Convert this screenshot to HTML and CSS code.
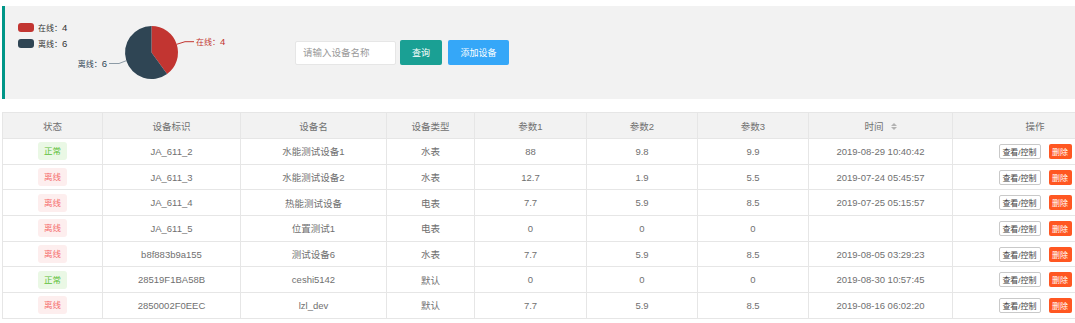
FILE: index.html
```html
<!DOCTYPE html>
<html lang="zh-CN">

<head>
    <meta charset="UTF-8" />
    <meta name="viewport" content="width=device-width, initial-scale=1.0" />
    <title>设备列表</title>
    <link rel="stylesheet" href="styles.css">
</head>

<body>
    <div class="quote">
        <svg class="chart" width="290" height="93" viewBox="0 0 290 93">
            <rect x="13" y="17" width="16" height="9" rx="3" fill="#c23531" />
            <text x="33" y="24.5" class="legend-text">在线：<tspan class="num">4</tspan></text>
            <rect x="13" y="33" width="16" height="9" rx="3" fill="#2f4554" />
            <text x="33" y="40.5" class="legend-text">离线：<tspan class="num">6</tspan></text>

            <path d="M146.5 46.5 L146.5 20 A26.5 26.5 0 0 1 162.08 67.94 Z" fill="#c23531" />
            <path d="M146.5 46.5 L162.08 67.94 A26.5 26.5 0 1 1 146.5 20 Z" fill="#2f4554" />

            <polyline points="171.7,38.3 180,35.7 189,35.7" fill="none" stroke="#c23531" stroke-width="1" />
            <text x="191" y="38.7" class="label-text" fill="#c23531">在线：<tspan class="num">4</tspan></text>
            <polyline points="121.3,54.7 114,57.5 104,57.5" fill="none" stroke="#8d9ba6" stroke-width="1" />
            <text x="102" y="60.5" class="label-text" fill="#2f4554" text-anchor="end">离线：<tspan class="num">6</tspan></text>
        </svg>
        <form class="search">
            <input type="text" name="name" placeholder="请输入设备名称" />
            <button type="button" class="btn btn-query">查询</button>
            <button type="button" class="btn btn-add">添加设备</button>
        </form>
    </div>

    <table class="device-table">
        <colgroup>
            <col style="width:100px">
            <col style="width:138px">
            <col style="width:146px">
            <col style="width:88px">
            <col style="width:112px">
            <col style="width:111px">
            <col style="width:111px">
            <col style="width:144px">
            <col style="width:165px">
        </colgroup>
        <thead>
            <tr>
                <th>状态</th>
                <th>设备标识</th>
                <th>设备名</th>
                <th>设备类型</th>
                <th>参数1</th>
                <th>参数2</th>
                <th>参数3</th>
                <th>时间<span class="sort"><i class="up"></i><i class="down"></i></span></th>
                <th>操作</th>
            </tr>
        </thead>
        <tbody>
            <tr>
                <td><span class="tag tag-ok">正常</span></td>
                <td>JA_611_2</td>
                <td>水能测试设备1</td>
                <td>水表</td>
                <td>88</td>
                <td>9.8</td>
                <td>9.9</td>
                <td>2019-08-29 10:40:42</td>
                <td><button class="op-view">查看/控制</button><button class="op-del">删除</button></td>
            </tr>
            <tr>
                <td><span class="tag tag-off">离线</span></td>
                <td>JA_611_3</td>
                <td>水能测试设备2</td>
                <td>水表</td>
                <td>12.7</td>
                <td>1.9</td>
                <td>5.5</td>
                <td>2019-07-24 05:45:57</td>
                <td><button class="op-view">查看/控制</button><button class="op-del">删除</button></td>
            </tr>
            <tr>
                <td><span class="tag tag-off">离线</span></td>
                <td>JA_611_4</td>
                <td>热能测试设备</td>
                <td>电表</td>
                <td>7.7</td>
                <td>5.9</td>
                <td>8.5</td>
                <td>2019-07-25 05:15:57</td>
                <td><button class="op-view">查看/控制</button><button class="op-del">删除</button></td>
            </tr>
            <tr>
                <td><span class="tag tag-off">离线</span></td>
                <td>JA_611_5</td>
                <td>位置测试1</td>
                <td>电表</td>
                <td>0</td>
                <td>0</td>
                <td>0</td>
                <td></td>
                <td><button class="op-view">查看/控制</button><button class="op-del">删除</button></td>
            </tr>
            <tr>
                <td><span class="tag tag-off">离线</span></td>
                <td>b8f883b9a155</td>
                <td>测试设备6</td>
                <td>水表</td>
                <td>7.7</td>
                <td>5.9</td>
                <td>8.5</td>
                <td>2019-08-05 03:29:23</td>
                <td><button class="op-view">查看/控制</button><button class="op-del">删除</button></td>
            </tr>
            <tr>
                <td><span class="tag tag-ok">正常</span></td>
                <td>28519F1BA58B</td>
                <td>ceshi5142</td>
                <td>默认</td>
                <td>0</td>
                <td>0</td>
                <td>0</td>
                <td>2019-08-30 10:57:45</td>
                <td><button class="op-view">查看/控制</button><button class="op-del">删除</button></td>
            </tr>
            <tr>
                <td><span class="tag tag-off">离线</span></td>
                <td>2850002F0EEC</td>
                <td>lzl_dev</td>
                <td>默认</td>
                <td>7.7</td>
                <td>5.9</td>
                <td>8.5</td>
                <td>2019-08-16 06:02:20</td>
                <td><button class="op-view">查看/控制</button><button class="op-del">删除</button></td>
            </tr>
        </tbody>
    </table>
</body>

</html>
```

FILE: styles.css
```css
html,
body {
    overflow: hidden;
}

body {
    margin: 6px 0 0 2px;
    background-color: #fff;
    font-family: "Liberation Sans", "Noto Sans CJK SC", sans-serif;
    color: #666;
}

.quote {
    display: flex;
    align-items: center;
    width: 1115px;
    height: 93px;
    box-sizing: border-box;
    border-left: 3px solid #009688;
    background-color: #f2f2f2;
}

.chart {
    display: block;
    flex: none;
}

.legend-text,
.label-text {
    font-family: "Liberation Sans", "Noto Sans CJK SC", sans-serif;
    font-size: 8px;
}

.legend-text .num,
.label-text .num {
    font-size: 9.5px;
}

.legend-text {
    fill: #333;
}

.search {
    display: flex;
    align-items: center;
}

.search input {
    width: 101px;
    height: 24px;
    box-sizing: border-box;
    padding: 0 7px;
    border: 1px solid #e6e6e6;
    border-radius: 2px;
    background-color: #fff;
    font-family: inherit;
    font-size: 9.5px;
    color: #333;
    outline: none;
}

.search input::placeholder {
    color: #9a9a9a;
}

.btn {
    height: 25px;
    border: none;
    border-radius: 2px;
    color: #fff;
    font-family: inherit;
    font-size: 9px;
    cursor: pointer;
}

.btn-query {
    width: 42px;
    margin-left: 4px;
    background-color: #1aa094;
}

.btn-add {
    width: 61px;
    margin-left: 6px;
    background-color: #35a7f8;
}

.device-table {
    margin-top: 13px;
    width: 1115px;
    table-layout: fixed;
    border-collapse: collapse;
    border: 1px solid #e6e6e6;
    font-size: 9.5px;
}

.device-table th,
.device-table td {
    padding: 0;
    border: 1px solid #e6e6e6;
    text-align: center;
    white-space: nowrap;
    color: #707070;
}

.device-table th {
    height: 25px;
    background-color: #f2f2f2;
    font-weight: normal;
}

.device-table td {
    height: 24.7px;
}

.sort {
    display: inline-flex;
    flex-direction: column;
    gap: 1px;
    margin-left: 7px;
    vertical-align: middle;
}

.sort i {
    width: 0;
    height: 0;
    border-left: 3px solid transparent;
    border-right: 3px solid transparent;
}

.sort .up {
    border-bottom: 3px solid #b2b2b2;
}

.sort .down {
    border-top: 3px solid #b2b2b2;
}

.tag {
    display: inline-block;
    width: 29px;
    height: 18px;
    line-height: 18px;
    border-radius: 3px;
    font-size: 8.5px;
    vertical-align: middle;
}

.device-table .tag-ok {
    background-color: #eaf8e5;
    color: #5dc03a;
}

.device-table .tag-off {
    background-color: #fdeeee;
    color: #f56c6c;
}

.op-view,
.op-del {
    height: 15px;
    padding: 0;
    border-radius: 2px;
    font-family: inherit;
    font-size: 8px;
    vertical-align: middle;
    cursor: pointer;
}

.op-view {
    width: 42px;
    border: 1px solid #c9c9c9;
    background-color: #fff;
    color: #444;
}

.op-del {
    width: 23px;
    margin-left: 8px;
    border: none;
    background-color: #ff5722;
    color: #fff;
}
```
